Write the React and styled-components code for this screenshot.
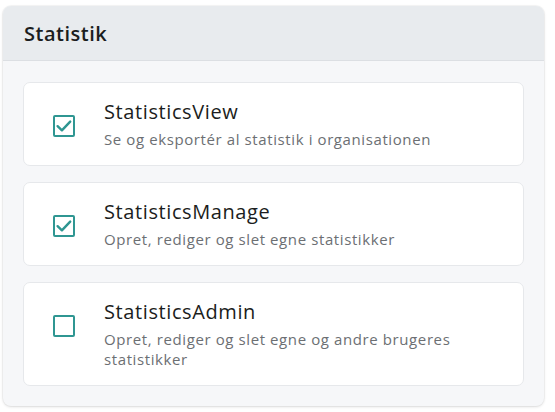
import React, { useState } from "react";
import styled, { createGlobalStyle } from "styled-components";

const GlobalStyle = createGlobalStyle`
  html, body { margin: 0; padding: 0; background: #ffffff; }
  body { font-family: "Open Sans", "Noto Sans", sans-serif; }
  * { box-sizing: border-box; }
`;

const Page = styled.div`
  padding: 6px 11px 8px 3px;
`;

const Panel = styled.section`
  width: 541px;
  border-radius: 8px;
  background: #f6f7f9;
  box-shadow: 0 1px 3px rgba(0, 0, 0, 0.12), 0 0 0 1px rgba(0, 0, 0, 0.03);
  overflow: hidden;
`;

const Header = styled.header`
  height: 55px;
  display: flex;
  align-items: center;
  padding: 0 21px;
  background: #e8ebee;
  border-bottom: 1px solid #dcdfe3;
`;

const Title = styled.h2`
  margin: 0;
  font-size: 20px;
  font-weight: 600;
  color: #1b1d20;
  letter-spacing: 0.5px;
`;

const Body = styled.div`
  display: flex;
  flex-direction: column;
  gap: 16px;
  padding: 21px 20px 20px 20px;
`;

const Card = styled.label`
  display: flex;
  align-items: flex-start;
  gap: 29px;
  padding: 16px 29px;
  background: #ffffff;
  border: 1px solid #e6e8eb;
  border-radius: 7px;
  cursor: pointer;
`;

const Box = styled.span`
  flex: none;
  margin-top: 16px;
  width: 22px;
  height: 22px;
  border: 2px solid #2f9692;
  border-radius: 2px;
  display: flex;
  align-items: center;
  justify-content: center;
  color: #2f9692;
`;

const Texts = styled.div`
  display: flex;
  flex-direction: column;
  gap: 4px;
`;

const Name = styled.div`
  font-size: 20px;
  line-height: 26px;
  color: #1b1d20;
  letter-spacing: 0.6px;
`;

const Desc = styled.div`
  font-size: 15px;
  line-height: 20px;
  color: #6c6f73;
  letter-spacing: 0.6px;
`;

const permissions = [
  { id: "StatisticsView", desc: "Se og eksportér al statistik i organisationen", on: true },
  { id: "StatisticsManage", desc: "Opret, rediger og slet egne statistikker", on: true },
  { id: "StatisticsAdmin", desc: "Opret, rediger og slet egne og andre brugeres statistikker", on: false },
];

function Check({ on }) {
  return (
    <Box>
      {on && (
        <svg width="18" height="18" viewBox="0 0 18 18" fill="none">
          <path d="M2.6 9.2 L6.9 13.3 L15.2 4.6" stroke="currentColor" strokeWidth="2.4" strokeLinecap="round" strokeLinejoin="round" />
        </svg>
      )}
    </Box>
  );
}

export default function App() {
  const [state, setState] = useState(() => permissions.map((p) => p.on));
  return (
    <Page>
      <GlobalStyle />
      <Panel>
        <Header>
          <Title>Statistik</Title>
        </Header>
        <Body>
          {permissions.map((p, i) => (
            <Card key={p.id} onClick={() => setState((s) => s.map((v, j) => (j === i ? !v : v)))}>
              <Check on={state[i]} />
              <Texts>
                <Name>{p.id}</Name>
                <Desc>{p.desc}</Desc>
              </Texts>
            </Card>
          ))}
        </Body>
      </Panel>
    </Page>
  );
}
